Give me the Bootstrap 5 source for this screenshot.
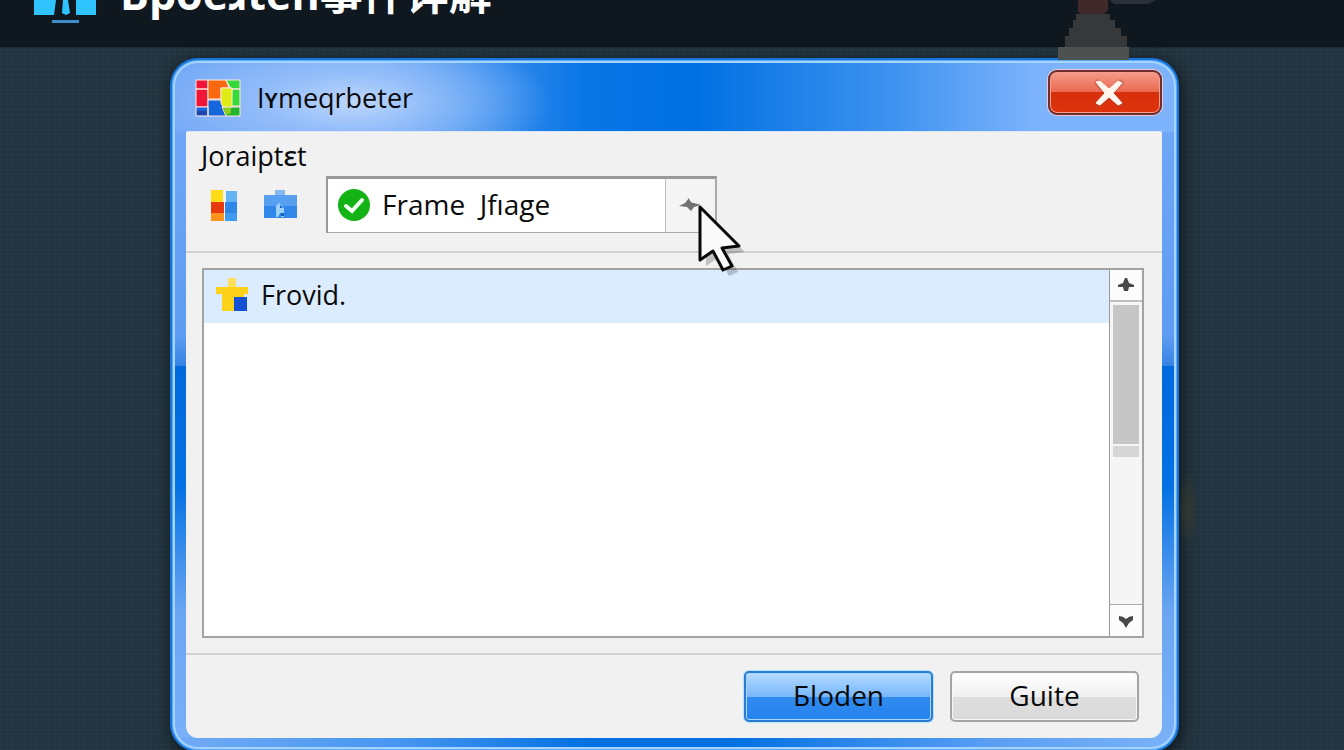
<!DOCTYPE html>
<html lang="zh">
<head>
<meta charset="utf-8">
<meta name="viewport" content="width=device-width, initial-scale=1">
<title>Iʏmeqrbeter</title>
<link href="https://cdn.jsdelivr.net/npm/bootstrap@5.3.0/dist/css/bootstrap.min.css" rel="stylesheet">
<style>
  body { font-family: "Open Sans", "Noto Sans", "Noto Sans CJK SC", sans-serif; font-size: 27px; line-height: 32px; font-weight: 500; color: #0a0a0a; background-color: #22343f; background-image: repeating-linear-gradient(0deg, #ffffff05 0 1px, transparent 1px 5px), repeating-linear-gradient(90deg, #ffffff05 0 1px, transparent 1px 6px); }
  .banner { height: 48px; background: #10181f; border-bottom: 1px solid #1d2a33; padding-left: 34px; gap: 24px; }
  .banner h1 { font-size: 43px; line-height: 48px; margin-top: -30px; font-weight: 700; color: #fff; white-space: nowrap; }
  .banner svg { width: 62px; height: 48px; }
  .figure-art { left: 1056px; top: 0; width: 100px; height: 60px; }
  .ember { left: 1178px; top: 470px; width: 20px; height: 80px; background: radial-gradient(closest-side, #33382f, transparent); }
  .desk { padding: 10px 165px 0 170px; }
  .aero { height: 694px; border: 2px solid #1674db; border-radius: 28px; padding: 0 15px 12px 14px; box-shadow: inset 0 0 0 1px #5aaaf8, inset 0 0 0 3px #a4d4ff, 2px 4px 16px #000a;
    background:
      radial-gradient(ellipse 200px 70px at 180px 42px, #bdd6fd, #a5c8fcb0 40%, #9fc3fb00) 0 0 / 100% 72px no-repeat,
      linear-gradient(90deg, #75a9f6 0, #6fa8f5 210px, #0a76e6 410px, #0070e2 52%, #3f93f0 72%, #7db3fb 86%, #7db3fb) top / 100% 72px no-repeat,
      linear-gradient(90deg, #72abf6, #4897f0 22%, #0070e2 42%, #0070e2 55%, #5b9ff3 82%, #7bb2f8) bottom / 100% 12px no-repeat,
      linear-gradient(#75aaf7, #5d9cf2 40%, #3583e4 306px, #0069dc 306px, #0472e4 62%, #6ba6f2 80%, #7ab1f8); }
  .caption { height: 71px; padding: 4px 0 0 9px; }
  .caption svg { width: 46px; height: 38px; }
  .btn-close-x { width: 114px; height: 45px; margin-bottom: 10px; padding: 0; border: 2px solid #6e2e30; border-radius: 9px; background: linear-gradient(#f69b8b, #ea6a50 48%, #d62f0b 50%, #df330d); box-shadow: 0 0 0 1px #f1c8d3, inset 0 0 0 1px #f59f8b; }
  .btn-close-x:hover { filter: brightness(1.1); }
  .client { background: #f1f1f1; border-radius: 2px 2px 12px 12px; border-top: 1px solid #dce8f8; }
  .tools { padding: 8px 15px 18px; border-bottom: 2px solid #d2d2d2; }
  .tool-row { gap: 20px; padding-left: 5px; }
  .tool { width: 36px; height: 36px; padding: 0; border: 0; background: none; }
  .tool svg { display: block; width: 36px; height: 36px; }
  .combo { width: 391px; height: 57px; margin-left: 8px; border: 1px solid #aaa; border-top: 3px solid #999; border-left: 2px solid #999; border-right: 2px solid #aaa; background: #fff; }
  .combo select { font-size: 28px; line-height: 40px; font-weight: 500; padding: 0 60px 4px 54px; border: 0; border-radius: 0; background: transparent; color: #0a0a0a; }
  .combo .tick { left: 9px; top: 9px; width: 34px; height: 34px; }
  .drop { right: 0; top: 0; bottom: 0; width: 50px; border-left: 1px solid #bbb; background: #f4f4f4; padding: 16px 12px; }
  .cursor-arrow { left: 369px; top: 25px; width: 60px; height: 76px; z-index: 3; }
  .list-zone { padding: 15px 18px 15px 16px; }
  .list-box { background: #fff; border: 2px solid #a3a3a3; }
  .list-box .list-group-item { background: #dbecff; color: #0a0a0a; border: 0; border-radius: 0; padding: 8px 12px 11px 10px; gap: 11px; }
  .scroller { width: 33px; border-left: 1px solid #999; background: #f5f5f5; }
  .scroller button { height: 32px; padding: 0; border: 0; background: #fcfcfc; }
  .scroller .up { border-bottom: 2px solid #c0c0c0; }
  .scroller .down { border-top: 1px solid #aaa; }
  .thumb { height: 139px; margin: 3px 3px 0; background: #c6c6c6; }
  .thumb-end { height: 11px; margin: 2px 3px; background: #d6d6d6; }
  .actions { border-top: 2px solid #d2d2d2; padding: 16px 23px; gap: 17px; }
  .actions .btn { width: 189px; height: 51px; padding: 0 0 4px; font-size: 28px; line-height: 32px; font-weight: 500; color: #0a0a0a; border-radius: 5px; }
  .btn-main { border: 2px solid #2b7bd0; background: linear-gradient(#b5dbff, #78b7fb 50%, #318bef 52%, #2583ed); box-shadow: inset 0 0 0 1px #a8d8ff, 0 0 0 1px #b4e2ff; }
  .btn-plain { border: 2px solid #a5a5a5; background: linear-gradient(#fff, #f0f0f0 50%, #dedede 52%, #dadada); box-shadow: inset 0 0 0 1px #f7f7f7; }
</style>
</head>
<body class="vh-100 overflow-hidden d-flex flex-column position-relative">
<header class="banner d-flex flex-shrink-0 overflow-hidden">
  <svg viewBox="0 0 62 48" aria-hidden="true"><path fill="#2fc3ff" d="M0 0H22L20 15H0ZM42 0H62V15H42ZM29 0h5l2 13-4 2-4-2z"/><path fill="#3c8fc8" d="M18 20h27v3H18z"/></svg>
  <h1 class="mb-0">Bpoeɹten<span>事件详解</span></h1>
</header>
<svg class="figure-art position-absolute" viewBox="0 0 100 60" aria-hidden="true"><path fill="#41282a" d="M22 0h30v10l-6 6H28l-6-4z"/><path fill="#2b303d" d="M54 0h46l-8 4H58z"/><path fill="#37383a" d="M20 14h34v6h5v8h6v8h6v11H9V36h4v-8h4v-8h3z"/><path fill="#4d5250" d="M2 47h71v13H2z"/></svg>
<div class="ember position-absolute"></div>

<main class="desk flex-grow-1">
  <section class="aero d-flex flex-column" aria-label="Iʏmeqrbeter">
    <div class="caption d-flex align-items-center flex-shrink-0">
      <svg viewBox="0 0 46 38" aria-hidden="true"><g stroke="#ffe8dc" stroke-width="1"><path fill="#ef1638" d="M1 1h12v9H1zM1 10h12v18H1z"/><path fill="#1565dd" d="M1 28h12v9H1zM13 21h13l5 16H13z"/><path fill="#fa6812" d="M13 1h18l3 8h-8v11H13z"/><path fill="#35da3a" d="M31 1h14v9h-9zM37 10h8v17h-9z"/><path fill="#23b52c" d="M27 28h18v9H31z"/><path fill="#dfeb12" d="M26 9h11v19h-9l-2-4z"/></g><path fill="#24a" d="M2 32h10v4H2z"/><path fill="#8ccf1f" d="M28 29h8v5l-5 2z"/></svg>
      <span class="ms-3">Iʏmeqrbeter</span>
      <button type="button" class="btn-close-x ms-auto" aria-label="Close">
        <svg viewBox="0 0 46 38" class="ms-2"><path d="M12 9l22 21M34 9L12 30" stroke="#a94a3a" stroke-width="7" stroke-linecap="round" opacity=".4"/><path d="M10 8l4-1 9 8 9-8 4 2-9 10 9 10-4 2-9-8-9 8-4-2 9-10z" fill="#fff6f0" stroke="#fff6f0" stroke-linejoin="round"/></svg>
      </button>
    </div>
    <div class="client flex-grow-1 d-flex flex-column">
      <div class="tools">
        <label for="frame" class="d-block">Joraiptɛt</label>
        <div class="tool-row d-flex align-items-center mt-1">
          <button type="button" class="tool" aria-label="Blocks"><svg viewBox="0 0 36 36"><path fill="#ffdc16" d="M5 3h12v12H5z"/><path fill="#e83a0e" d="M5 15h13v11H5z"/><path fill="#ff941d" d="M5 26h13v8H5z"/><path fill="#63b3f5" d="M20 4h11v12H20z"/><path fill="#2e86e6" d="M19 15h12v11H19z"/><path fill="#3f9bf0" d="M19 26h12v8H19z"/></svg></button>
          <button type="button" class="tool" aria-label="Case"><svg viewBox="0 0 36 36"><path fill="#85b7f2" d="M13 3h10v7H13z"/><path fill="#579ff0" d="M2 8h33v13H2z"/><path fill="#3187e9" d="M2 19h33v12H2z"/><path fill="#9bd2fb" d="M14 19l3-3 5 5v9h-3v-5l-3 5h-2z"/><path fill="#1463bd" d="M18 18l3 3h-3zM19 26h3v3h-3z"/></svg></button>
          <div class="combo position-relative">
            <select id="frame" class="form-select h-100 w-100"><option>Frame&nbsp; Jfıage</option></select>
            <svg class="tick position-absolute pe-none" viewBox="0 0 34 34"><circle cx="17" cy="17" r="16" fill="#13b315"/><path d="M9 18l6 5 10-11" fill="none" stroke="#f0fff0" stroke-width="4" stroke-linecap="round"/></svg>
            <span class="drop position-absolute pe-none"><svg class="d-block" width="24" height="20" viewBox="0 0 24 20"><path fill="#717171" d="M11 3q1 5 5 5l7 2-7 2-3 4-4-4-8-1 6-3z"/></svg></span>
            <svg class="cursor-arrow position-absolute pe-none" viewBox="0 0 60 76"><path transform="translate(6 6)" d="M3 3v53l13-9 10 19 9-4-10-18 17-2z" fill="#0003"/><path d="M3 3v53l13-9 10 19 9-4-10-18 17-2z" fill="#fafafa" stroke="#080808" stroke-width="3" stroke-linejoin="round"/></svg>
          </div>
        </div>
      </div>
      <div class="list-zone flex-grow-1 d-flex">
        <div class="list-box flex-grow-1 d-flex">
          <div class="list-group rounded-0 flex-grow-1">
            <button type="button" class="list-group-item d-flex align-items-center">
              <svg width="36" height="34" viewBox="0 0 36 34" aria-hidden="true"><path fill="#ffd21a" d="M2 9h32v7h-4v17H8V16H2z"/><path fill="#ffe05a" d="M14 0h8v9h-8z"/><path fill="#1450d2" d="M20 19h13v14H20z"/></svg>
              <span>Frovid.</span>
            </button>
          </div>
          <div class="scroller d-flex flex-column">
            <button type="button" class="up" aria-label="Scroll up"><svg class="d-block mx-auto" width="16" height="16" viewBox="0 0 16 16"><path fill="#484848" d="M7 1h2l2 5 5 2v2h-5l-1 4H6l-1-4H0V8l5-2z"/></svg></button>
            <div class="thumb"></div>
            <div class="thumb-end"></div>
            <button type="button" class="down mt-auto" aria-label="Scroll down"><svg class="d-block mx-auto" width="16" height="16" viewBox="0 0 16 16"><path fill="#484848" d="M1 3q4 0 7 3 3-3 7-3v4l-4 3-3 5-3-5-4-3z"/></svg></button>
          </div>
        </div>
      </div>
      <div class="actions d-flex justify-content-end">
        <button type="button" class="btn btn-main">Бloden</button>
        <button type="button" class="btn btn-plain">Guite</button>
      </div>
    </div>
  </section>
</main>
<script src="https://cdn.jsdelivr.net/npm/bootstrap@5.3.0/dist/js/bootstrap.bundle.min.js"></script>
</body>
</html>
